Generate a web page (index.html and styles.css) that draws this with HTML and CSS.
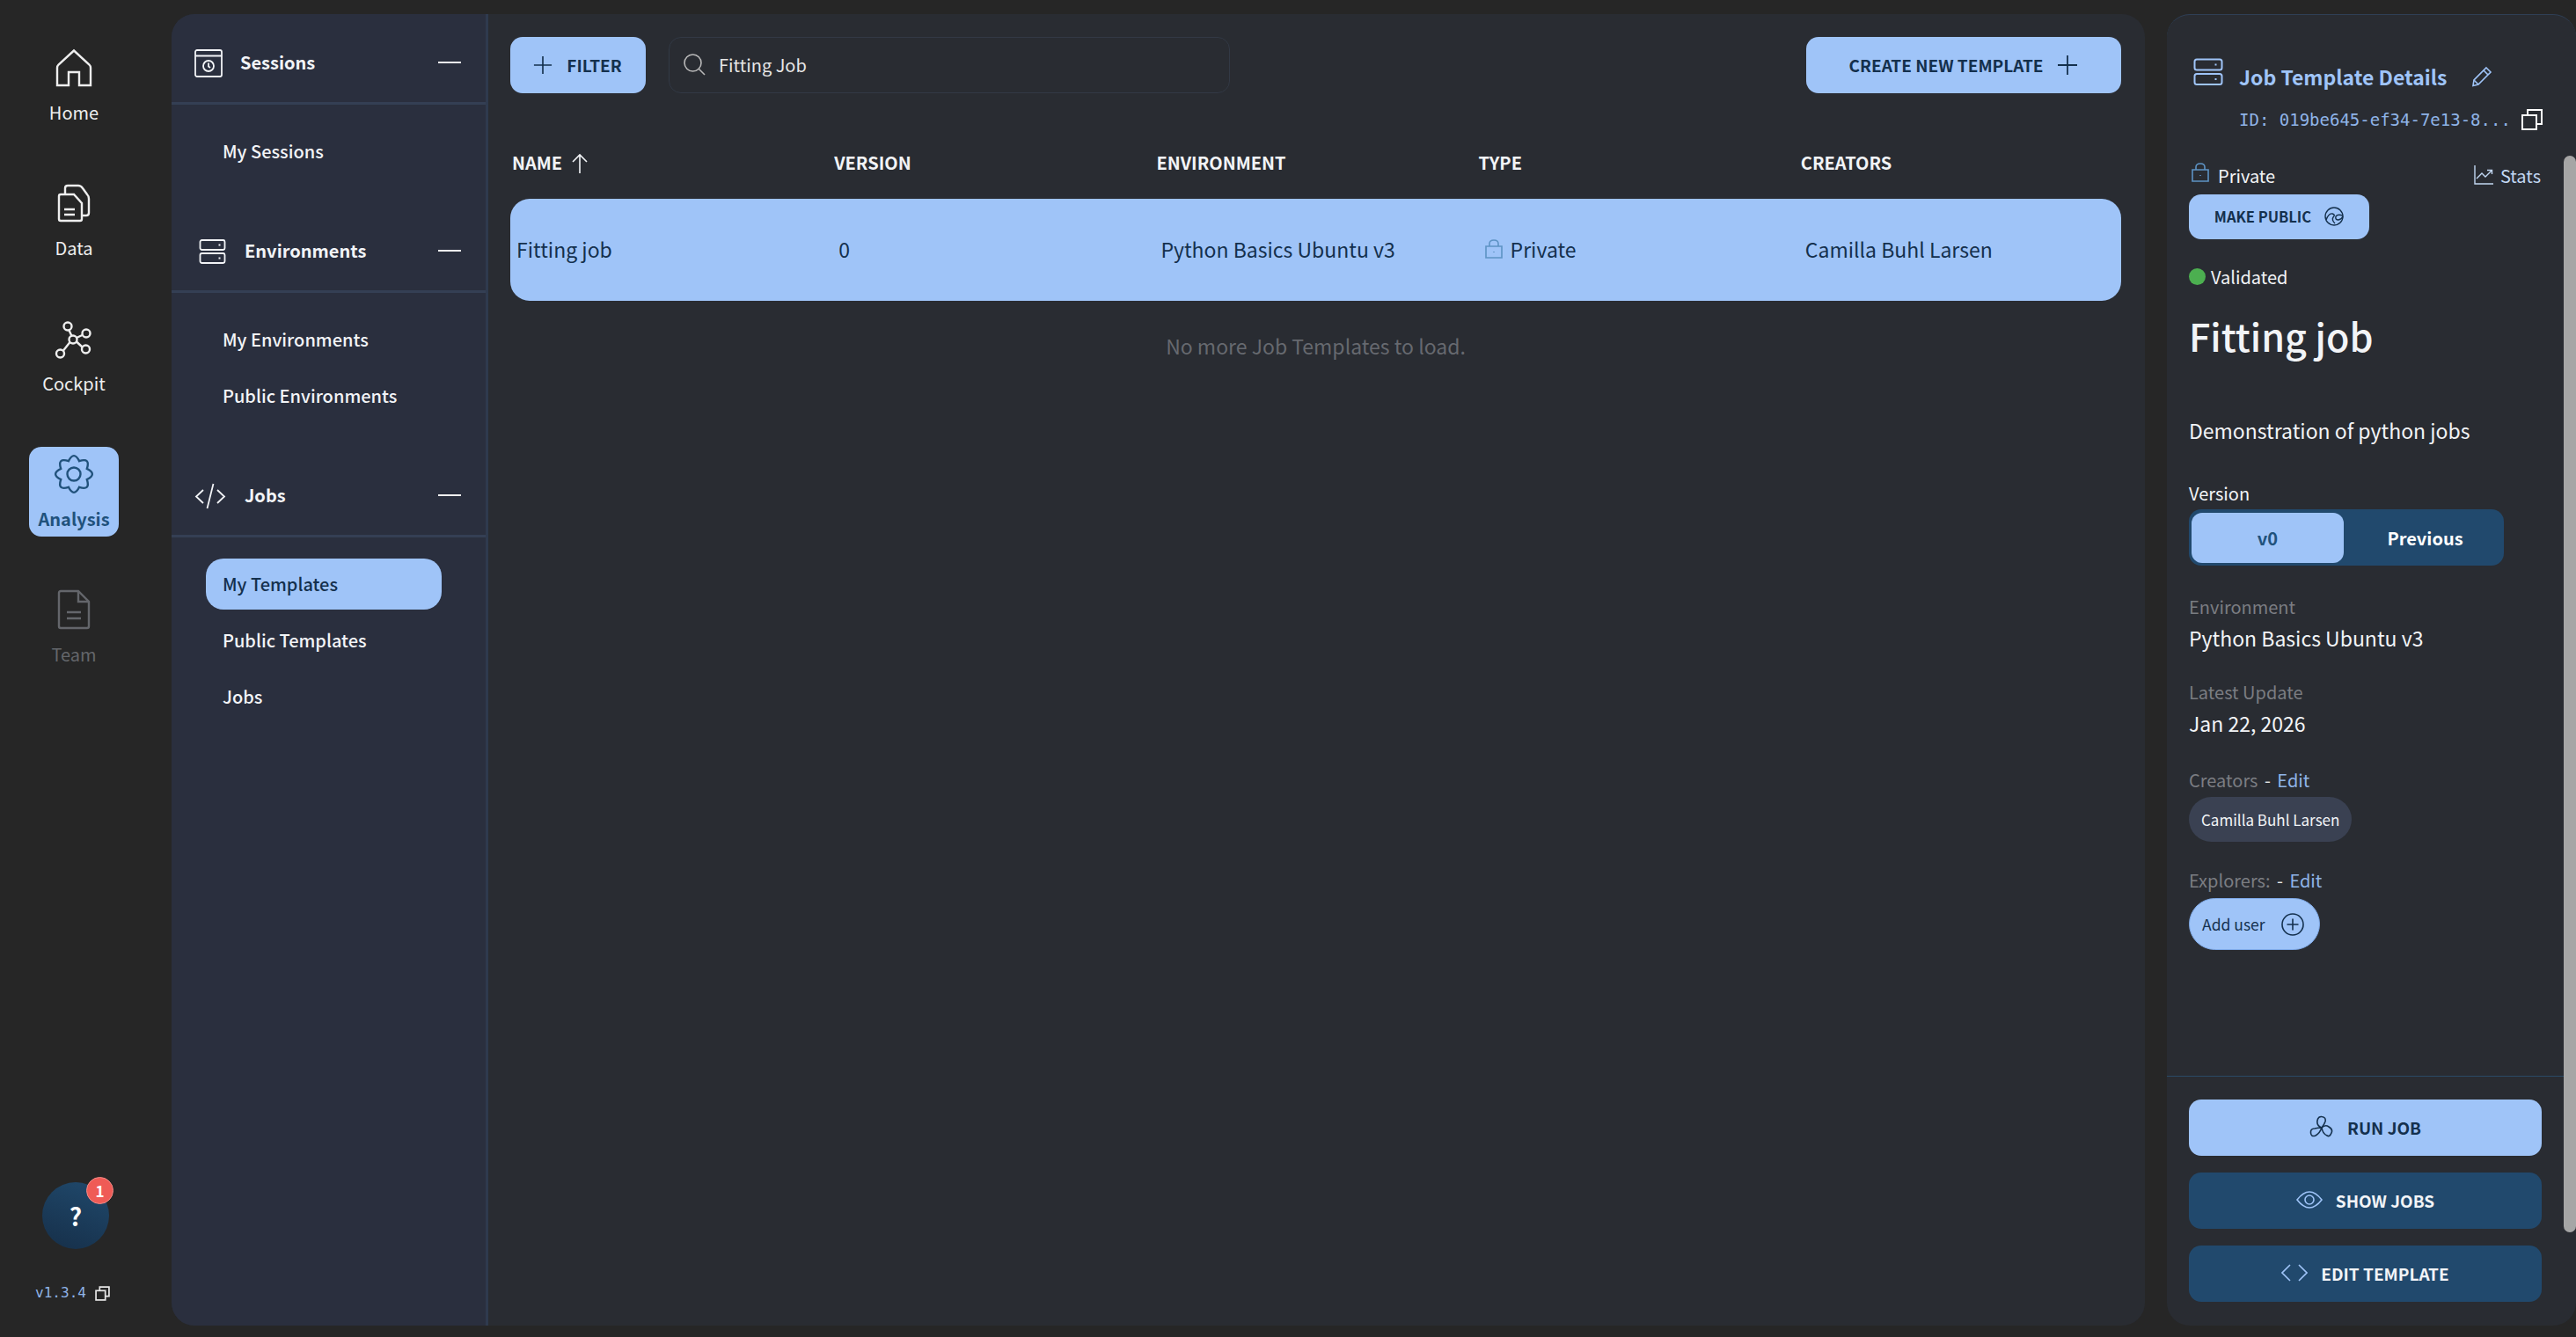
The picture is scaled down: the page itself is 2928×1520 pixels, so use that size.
FILE: index.html
```html
<!DOCTYPE html>
<html lang="en">
<head>
    <meta charset="UTF-8">
    <meta name="viewport" content="width=device-width, initial-scale=1.0">
    <title>Job Templates</title>
    <link rel="stylesheet" href="styles.css">
</head>
<body>
    <nav class="rail">
        <a class="rail-item">
            <svg class="rail-icon" viewBox="0 0 48 48"><path d="M5 44V24Q5 22 6.500 20.500L24 4.500 41.500 20.500Q43 22 43 24V44H30V29H18V44Z"/></svg>
            <span>Home</span>
        </a>
        <a class="rail-item">
            <svg class="rail-icon" viewBox="0 0 48 48"><path d="M9 14H24L33 24V42Q33 44 31 44H9Q7 44 7 42V16Q7 14 9 14Z"/><path d="M14 14V7Q14 4 17 4H29Q32 4 34 7L39 14Q41 16 41 19V35Q41 38 38 38H33"/><path d="M13 31H25M13 37H25"/></svg>
            <span>Data</span>
        </a>
        <a class="rail-item">
            <svg class="rail-icon" viewBox="0 0 48 48"><circle cx="23" cy="25" r="4.500"/><circle cx="17" cy="10" r="4.500"/><circle cx="38" cy="18" r="4.500"/><circle cx="37.500" cy="36" r="4.500"/><circle cx="8.500" cy="41" r="4.500"/><path d="M18.500 14.500L21.500 21M27 23L33.500 20M27 27.500L33.500 33.500M19.500 28L12 37.500"/></svg>
            <span>Cockpit</span>
        </a>
        <a class="rail-item active">
            <svg class="rail-icon" viewBox="0 0 48 48"><path d="M38.800 17.900Q51 24 38.800 30.100Q43.100 43.100 30.100 38.800Q24 51 17.900 38.800Q4.900 43.100 9.200 30.100Q-3 24 9.200 17.900Q4.900 4.900 17.900 9.200Q24 -3 30.100 9.200Q43.100 4.900 38.800 17.900Z"/><circle cx="24" cy="24" r="7.500"/></svg>
            <span>Analysis</span>
        </a>
        <a class="rail-item disabled">
            <svg class="rail-icon" viewBox="0 0 48 48"><path d="M9 3H29L41 15V43Q41 45 39 45H9Q7 45 7 43V5Q7 3 9 3Z"/><path d="M29 3V15H41" /><path d="M16 27H32M16 34H32"/></svg>
            <span>Team</span>
        </a>
        <div class="rail-bottom">
            <div class="help">?<span class="help-badge">1</span></div>
            <div class="version">
                <span>v1.3.4</span>
                <svg class="copy-icon small" viewBox="0 0 24 24"><rect x="1.500" y="7.500" width="15" height="15"/><path d="M7.500 7.500V1.500H22.500V16.500H16.500"/></svg>
            </div>
        </div>
    </nav>

    <div class="shell">
        <aside class="sidebar">
            <section class="side-section">
                <header class="side-head">
                    <svg class="side-icon" viewBox="0 0 32 32"><rect x="1" y="1" width="30" height="30" rx="2"/><path d="M1 7.500H31"/><circle cx="16" cy="19" r="6"/><path d="M16 15.500V19.500L18 21"/></svg>
                    <h3>Sessions</h3>
                    <span class="dash"></span>
                </header>
                <ul class="side-list">
                    <li>My Sessions</li>
                </ul>
            </section>
            <section class="side-section">
                <header class="side-head">
                    <svg class="side-icon env" viewBox="0 0 32 32"><rect x="1.500" y="3" width="28" height="11" rx="2"/><rect x="1.500" y="18" width="28" height="11" rx="2"/><path d="M22.500 8.500H24.500M22.500 23.500H24.500"/></svg>
                    <h3>Environments</h3>
                    <span class="dash"></span>
                </header>
                <ul class="side-list">
                    <li>My Environments</li>
                    <li>Public Environments</li>
                </ul>
            </section>
            <section class="side-section">
                <header class="side-head">
                    <svg class="side-icon code" viewBox="0 0 36 32"><path d="M10 9L2 16.500 10 24M26 9L34 16.500 26 24M21.500 2L14.500 30"/></svg>
                    <h3>Jobs</h3>
                    <span class="dash"></span>
                </header>
                <ul class="side-list">
                    <li class="selected">My Templates</li>
                    <li>Public Templates</li>
                    <li>Jobs</li>
                </ul>
            </section>
        </aside>

        <main class="content">
            <div class="toolbar">
                <button class="btn-light filter-btn">
                    <svg class="plus" viewBox="0 0 24 24"><path d="M12 1V23M1 12H23"/></svg>
                    FILTER
                </button>
                <div class="search">
                    <svg class="search-icon" viewBox="0 0 26 26"><circle cx="11.500" cy="11.500" r="9.500"/><path d="M18.500 18.500L25 25"/></svg>
                    <span>Fitting Job</span>
                </div>
                <button class="btn-light create-btn">
                    CREATE NEW TEMPLATE
                    <svg class="plus" viewBox="0 0 24 24"><path d="M12 1V23M1 12H23"/></svg>
                </button>
            </div>

            <div class="table-head">
                <div>NAME <svg class="sort-icon" viewBox="0 0 20 24"><path d="M10 23V2M2 10L10 2 18 10"/></svg></div>
                <div>VERSION</div>
                <div>ENVIRONMENT</div>
                <div>TYPE</div>
                <div>CREATORS</div>
            </div>
            <div class="table-row">
                <div>Fitting job</div>
                <div>0</div>
                <div>Python Basics Ubuntu v3</div>
                <div class="type-cell">
                    <svg class="lock-icon" viewBox="0 0 20 22"><path d="M1 8H19V21H1Z"/><path d="M5 8V5Q5 1 10 1 15 1 15 5V8"/><path d="M10 14V15"/></svg>
                    Private
                </div>
                <div>Camilla Buhl Larsen</div>
            </div>
            <p class="no-more">No more Job Templates to load.</p>
        </main>
    </div>

    <aside class="details">
        <div class="scroll-thumb"></div>
        <div class="details-body">
            <div class="details-title">
                <svg class="title-icon" viewBox="0 0 34 32"><rect x="1.500" y="1.500" width="31" height="12" rx="2.500"/><rect x="1.500" y="18" width="31" height="12" rx="2.500"/><path d="M24.500 7.500H26.500M24.500 24H26.500"/></svg>
                <h2>Job Template Details</h2>
                <svg class="pencil-icon" viewBox="0 0 24 24"><path d="M17 2L22 7 8 21 2 22.500 3 16Z"/><path d="M14 5L19 10M3 16L8 21"/></svg>
            </div>
            <div class="details-id">
                <span>ID: 019be645-ef34-7e13-8...</span>
                <svg class="copy-icon" viewBox="0 0 24 24"><rect x="1" y="7" width="16" height="16"/><path d="M7 7V1H23V17H17"/></svg>
            </div>
            <div class="privacy-row">
                <span class="privacy">
                    <svg class="lock-icon" viewBox="0 0 20 22"><path d="M1 8H19V21H1Z"/><path d="M5 8V5Q5 1 10 1 15 1 15 5V8"/><path d="M10 14V15"/></svg>
                    Private
                </span>
                <span class="stats">
                    <svg class="stats-icon" viewBox="0 0 22 22"><path d="M1 0V21H22"/><path d="M3 15L9 9 13 13 20 6M15 5.500H20.500V10"/></svg>
                    Stats
                </span>
            </div>
            <button class="btn-light make-public">
                MAKE PUBLIC
                <svg class="globe-icon" viewBox="0 0 22 22"><circle cx="11" cy="11" r="10"/><path d="M2 15Q5 7 9 8 13 9 10 12 8 15 12 19M21 10Q15 8 13 11 12 15 16 15 20 14 21 11"/></svg>
            </button>
            <div class="validated"><span class="dot"></span>Validated</div>
            <h1>Fitting job</h1>
            <p class="description">Demonstration of python jobs</p>
            <div class="version-label">Version</div>
            <div class="segment">
                <span class="seg-on">v0</span>
                <span class="seg-off">Previous</span>
            </div>
            <div class="field-label env-label">Environment</div>
            <div class="field-value">Python Basics Ubuntu v3</div>
            <div class="field-label update-label">Latest Update</div>
            <div class="field-value">Jan 22, 2026</div>
            <div class="field-label creators-label">Creators <span class="sep">-</span> <a>Edit</a></div>
            <div class="chip">Camilla Buhl Larsen</div>
            <div class="field-label explorers-label">Explorers: <span class="sep">-</span> <a>Edit</a></div>
            <button class="add-user">
                Add user
                <svg class="add-icon" viewBox="0 0 26 26"><circle cx="13" cy="13" r="12"/><path d="M13 6.500V19.500M6.500 13H19.500"/></svg>
            </button>
        </div>
        <div class="details-actions">
            <button class="action action-light">
                <svg class="action-icon run" viewBox="0 0 28 26"><path d="M14 14Q8 12 9 6 10 1 14 1.500 19 2 18 7 17 10 14 14Z"/><path d="M14 14Q18 10 22 13 27 16 25 20 23 25 20 23 15 21 14 14Z"/><path d="M14 14Q12 20 7 23 2 25 1.500 20 1 15 6 15 10 14 14 14Z"/></svg>
                RUN JOB
            </button>
            <button class="action action-dark">
                <svg class="action-icon eye" viewBox="0 0 30 20"><path d="M1 10Q8 1 15 1 22 1 29 10 22 19 15 19 8 19 1 10Z"/><circle cx="15" cy="10" r="5"/></svg>
                SHOW JOBS
            </button>
            <button class="action action-dark">
                <svg class="action-icon brackets" viewBox="0 0 30 20"><path d="M10 1L1 10 10 19M20 1L29 10 20 19"/></svg>
                EDIT TEMPLATE
            </button>
        </div>
    </aside>
</body>
</html>
```

FILE: styles.css
```css
* {
    box-sizing: border-box;
}

body {
    margin: 0;
    height: 100vh;
    overflow: hidden;
    display: flex;
    background: #262626;
    color: #f2f4f7;
    font-family: "Noto Sans CJK JP", "Noto Sans", sans-serif;
    font-size: 20px;
}

svg {
    fill: none;
    stroke: currentColor;
    flex-shrink: 0;
}

h1, h2, h3, p, ul {
    margin: 0;
    padding: 0;
}

button {
    border: none;
    font-family: inherit;
    cursor: pointer;
}

/* left rail */
.rail {
    width: 195px;
    flex-shrink: 0;
    display: flex;
    flex-direction: column;
    align-items: center;
    gap: 52px;
    padding: 46px 27px 0 0;
}

.rail-item {
    width: 102px;
    height: 102px;
    border-radius: 14px;
    display: flex;
    flex-direction: column;
    align-items: center;
    line-height: 30px;
    font-size: 20px;
    color: #eeeeee;
}

.rail-icon {
    width: 48px;
    height: 48px;
    margin-top: 7px;
    margin-bottom: 12px;
    stroke-width: 2.400;
}

.rail-item.active {
    background: #9fc4f8;
    color: #21527c;
    font-weight: 700;
}

.rail-item.disabled {
    color: #64666b;
}

.rail-bottom {
    margin-top: auto;
    margin-left: -3px;
    padding-bottom: 38px;
    display: flex;
    flex-direction: column;
    align-items: center;
}

.help {
    position: relative;
    width: 76px;
    height: 76px;
    border-radius: 50%;
    margin-left: 7px;
    margin-bottom: 38px;
    background: linear-gradient(20deg, #162f49, #20496c);
    display: flex;
    align-items: center;
    justify-content: center;
    font-size: 28px;
    font-weight: 700;
    color: #fff;
}

.help-badge {
    position: absolute;
    top: -6px;
    right: -5px;
    width: 31px;
    height: 31px;
    border-radius: 50%;
    background: #ef5b56;
    border: 1px solid #f08a86;
    display: flex;
    align-items: center;
    justify-content: center;
    font-size: 17px;
}

.version {
    display: flex;
    align-items: center;
    gap: 10px;
    font-family: "DejaVu Sans Mono", monospace;
    font-size: 16px;
    line-height: 24px;
    color: #8fb4e8;
}

.copy-icon {
    width: 24px;
    height: 24px;
    color: #fff;
    stroke-width: 2;
}

.copy-icon.small {
    width: 17px;
    height: 17px;
    stroke-width: 2.400;
    color: #e8e8e8;
}

/* sidebar + table shell */
.shell {
    flex: 1;
    display: flex;
    margin: 16px 25px 13px 0;
    border-radius: 26px;
    overflow: hidden;
    background: #292c32;
}

.sidebar {
    width: 360px;
    flex-shrink: 0;
    background: #2a2f3e;
    border-right: 3px solid #2f3a4e;
}

.side-head {
    height: 103px;
    padding: 40px 28px 0 26px;
    border-bottom: 3px solid #343f54;
    display: flex;
    align-items: flex-start;
    gap: 20px;
}

.side-head h3 {
    flex: 1;
    font-size: 20px;
    font-weight: 700;
    line-height: 30px;
}

.side-icon {
    width: 32px;
    height: 32px;
    stroke-width: 1.800;
}

.side-icon.env {
    margin-left: 5px;
    margin-right: 0;
}

.side-icon.code {
    width: 36px;
    margin-right: 1px;
}

.dash {
    width: 26px;
    height: 2px;
    margin-top: 14px;
    background: #f0f0f0;
}

.side-list {
    list-style: none;
    padding: 24px 50px 29px 39px;
    display: flex;
    flex-direction: column;
    gap: 6px;
}

.side-list li {
    height: 58px;
    padding: 0 0 1px 19px;
    display: flex;
    align-items: center;
    border-radius: 20px;
    font-size: 20px;
    font-weight: 500;
}

.side-list li.selected {
    background: #9fc4f8;
    color: #14304d;
}

/* table */
.content {
    flex: 1;
    padding: 26px 27px 0 25px;
}

.toolbar {
    display: flex;
    gap: 26px;
    height: 64px;
}

.btn-light {
    padding-bottom: 2px;
    background: #9fc4f8;
    color: #14304d;
    font-weight: 700;
    border-radius: 14px;
    display: flex;
    align-items: center;
    justify-content: center;
}

.filter-btn {
    width: 154px;
    padding-left: 5px;
    gap: 16px;
    font-size: 19px;
}

.plus {
    width: 24px;
    height: 24px;
    stroke-width: 1.800;
}

.filter-btn .plus {
    width: 22px;
    height: 22px;
}

.search {
    width: 638px;
    border: 1px solid #323945;
    border-radius: 14px;
    display: flex;
    align-items: center;
    gap: 15px;
    padding: 0 0 2px 15px;
    font-size: 20px;
    color: #e6e6e6;
}

.search-icon {
    width: 26px;
    height: 26px;
    stroke-width: 1.600;
    color: #b9b9b9;
}

.create-btn {
    width: 358px;
    margin-left: auto;
    gap: 16px;
    font-size: 19px;
}

.table-head,
.table-row {
    display: grid;
    grid-template-columns: repeat(5, 1fr);
}

.table-head {
    margin-top: 40px;
    height: 80px;
    padding-top: 24px;
    font-size: 20px;
    font-weight: 700;
    line-height: 30px;
}

.table-head > div {
    padding-left: 2px;
}

.sort-icon {
    width: 20px;
    height: 24px;
    margin-left: 5px;
    stroke-width: 1.600;
    vertical-align: -5px;
}

.table-row {
    height: 116px;
    padding-bottom: 2px;
    border-radius: 22px;
    background: #9fc4f8;
    color: #14304d;
    align-items: center;
    font-size: 23px;
}

.table-row > div {
    padding-left: 7px;
}

.table-row > .type-cell {
    display: flex;
    align-items: center;
    gap: 9px;
    padding-left: 9px;
}

.lock-icon {
    width: 20px;
    height: 22px;
    stroke-width: 1.600;
    color: #5d93c4;
}

.no-more {
    padding-top: 34px;
    text-align: center;
    font-size: 23px;
    line-height: 34px;
    color: #66696f;
}

/* right panel */
.details {
    position: relative;
    width: 465px;
    flex-shrink: 0;
    margin: 16px 0 13px 0;
    background: #292c32;
    border-top: 1px solid #2f3f55;
    border-radius: 26px;
    display: flex;
    flex-direction: column;
    overflow: hidden;
}

.scroll-thumb {
    position: absolute;
    top: 160px;
    right: 0;
    width: 14px;
    height: 1224px;
    border-radius: 7px;
    background: #a6a6a6;
}

.details-body {
    flex: 1;
    padding: 49px 25px 0 25px;
}

.details-title {
    display: flex;
    align-items: flex-start;
    color: #9fc4f8;
}

.title-icon {
    width: 34px;
    height: 32px;
    margin-left: 5px;
    stroke-width: 2;
}

.details-title h2 {
    margin-left: 18px;
    margin-top: 4px;
    font-size: 23px;
    font-weight: 700;
    line-height: 34px;
}

.pencil-icon {
    width: 24px;
    height: 24px;
    margin-left: 28px;
    margin-top: 9px;
    stroke-width: 1.600;
}

.details-id {
    display: flex;
    align-items: center;
    gap: 12px;
    height: 30px;
    margin-top: 17px;
    padding-left: 57px;
    font-family: "DejaVu Sans Mono", monospace;
    font-size: 19px;
    color: #8fb4e8;
}

.privacy-row {
    display: flex;
    justify-content: space-between;
    margin-top: 30px;
    height: 36px;
    align-items: center;
    padding-right: 15px;
    font-size: 20px;
}

.privacy,
.stats {
    display: flex;
    align-items: center;
    gap: 10px;
}

.privacy .lock-icon {
    margin-left: 3px;
    margin-top: -6px;
}

.stats {
    color: #c2d7f2;
    gap: 8px;
}

.stats-icon {
    width: 22px;
    height: 22px;
    stroke-width: 1.400;
}

.make-public {
    width: 205px;
    height: 51px;
    margin-top: 4px;
    gap: 15px;
    font-size: 16.500px;
}

.globe-icon {
    width: 22px;
    height: 22px;
    stroke-width: 1.400;
}

.validated {
    display: flex;
    align-items: center;
    gap: 6px;
    margin-top: 26px;
    height: 32px;
    font-size: 20px;
}

.dot {
    width: 19px;
    height: 19px;
    border-radius: 50%;
    background: #4caf50;
}

h1 {
    margin-top: 16px;
    font-size: 43px;
    font-weight: 500;
    line-height: 70px;
}

.description {
    margin-top: 55px;
    font-size: 23px;
    line-height: 36px;
}

.version-label {
    margin-top: 39px;
    font-size: 20px;
    line-height: 30px;
}

.segment {
    display: flex;
    width: 358px;
    height: 64px;
    margin-top: 3px;
    padding: 4px 3px 3px;
    border-radius: 14px;
    background: #21496d;
    font-weight: 700;
    font-size: 20px;
}

.seg-on,
.seg-off {
    display: flex;
    align-items: center;
    justify-content: center;
}

.seg-on {
    width: 173px;
    border-radius: 12px;
    background: #9fc4f8;
    color: #21527c;
}

.seg-off {
    flex: 1;
    padding-left: 6px;
    color: #fff;
}

.field-label {
    font-size: 20px;
    line-height: 30px;
    color: #7b7d82;
}

.env-label {
    margin-top: 32px;
}

.update-label {
    margin-top: 29px;
}

.creators-label {
    margin-top: 32px;
}

.explorers-label {
    margin-top: 29px;
}

.sep {
    margin: 0 3px;
    color: #e6e6e6;
}

.field-label a {
    color: #8fb4e8;
}

.field-value {
    margin-top: 2px;
    font-size: 23px;
    line-height: 36px;
}

.chip {
    display: inline-flex;
    align-items: center;
    height: 51px;
    margin-top: 4px;
    padding: 0 14px;
    border-radius: 26px;
    background: #3a4152;
    font-size: 17px;
}

.add-user {
    display: flex;
    align-items: center;
    justify-content: space-between;
    width: 149px;
    height: 59px;
    margin-top: 5px;
    padding: 0 17px 0 14px;
    border: 1px solid #7faae8;
    border-radius: 30px;
    background: #9fc4f8;
    color: #14304d;
    font-size: 17.500px;
}

.add-icon {
    width: 26px;
    height: 26px;
    stroke-width: 1.600;
}

.details-actions {
    border-top: 1px solid #2a4a66;
    padding: 26px 39px 27px 25px;
    display: flex;
    flex-direction: column;
    gap: 19px;
}

.action {
    height: 64px;
    padding-bottom: 3px;
    border-radius: 14px;
    display: flex;
    align-items: center;
    justify-content: center;
    gap: 15px;
    font-size: 19px;
    font-weight: 700;
}

.action-light {
    background: #9fc4f8;
    color: #14304d;
}

.action-dark {
    background: #21496d;
    color: #f2f4f7;
}

.action-icon {
    stroke-width: 1.600;
}

.action-icon.run {
    width: 28px;
    height: 26px;
}

.action-icon.eye,
.action-icon.brackets {
    width: 30px;
    height: 20px;
    color: #9fc4f8;
}
```
